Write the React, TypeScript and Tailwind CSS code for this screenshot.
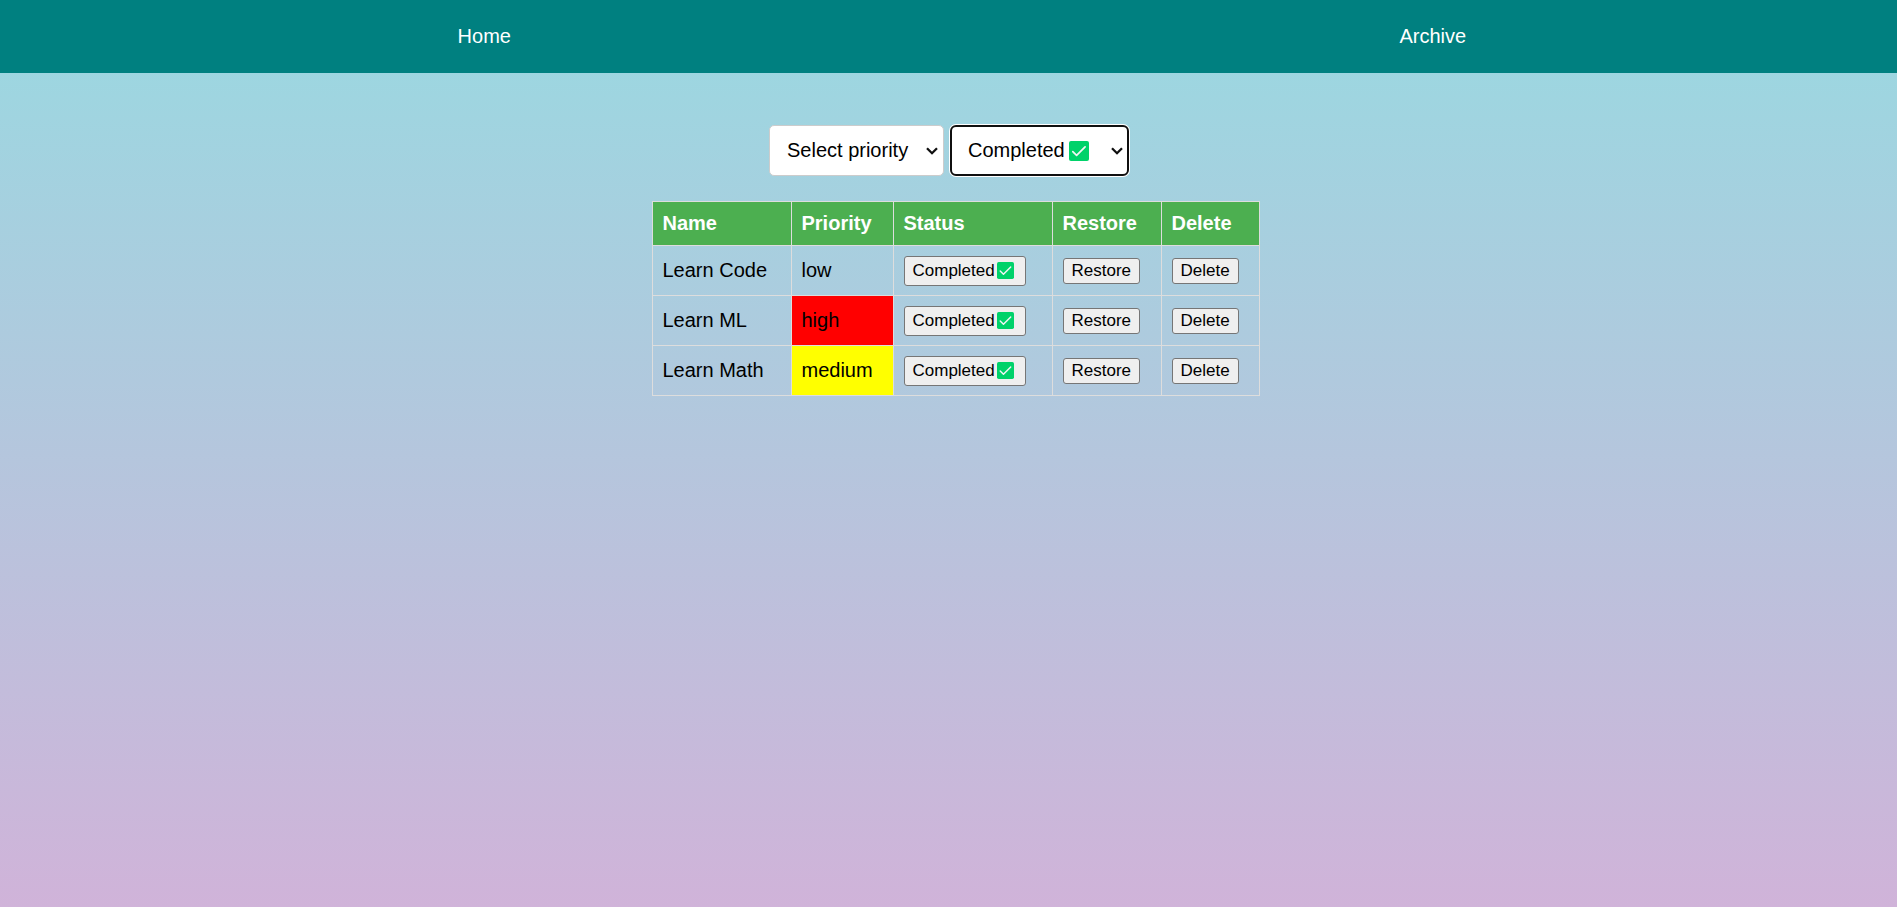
import React from "react";

type Priority = "low" | "medium" | "high";
type Task = { name: string; priority: Priority };

const tasks: Task[] = [
  { name: "Learn Code", priority: "low" },
  { name: "Learn ML", priority: "high" },
  { name: "Learn Math", priority: "medium" },
];

const priorityColor: Record<Priority, string> = {
  low: "",
  medium: "bg-[#ffff00]",
  high: "bg-[#ff0000]",
};

const cell = "border border-[#dddddd] px-[10px]";
const button =
  "block h-[26px] rounded-[3px] border border-[#767676] bg-[#efefef] px-2 text-[17px] leading-[22px] whitespace-nowrap text-black";

function CheckMark({ className }: { className: string }) {
  return (
    <svg viewBox="0 0 20 20" className={className} aria-hidden="true">
      <rect width="20" height="20" rx="2" fill="#00d26a" />
      <path
        d="M3.8 10.6 L7.6 14.4 L16.1 5.9"
        fill="none"
        stroke="#f4f4f4"
        strokeWidth="1.7"
        strokeLinecap="round"
        strokeLinejoin="round"
      />
    </svg>
  );
}

function Chevron() {
  return (
    <svg
      viewBox="0 0 12 8"
      className="pointer-events-none absolute top-[22px] right-[6px] h-2 w-3"
      aria-hidden="true"
    >
      <path d="M1 1.2 L6 6.2 L11 1.2" fill="none" stroke="#101010" strokeWidth="2.3" />
    </svg>
  );
}

export default function App() {
  return (
    <div className="min-h-screen bg-[linear-gradient(#99d9e1,#d0b3d9)] font-['Liberation_Sans',Arial,sans-serif] text-[20px] leading-[23px] text-black">
      <nav className="grid h-[73px] grid-cols-2 items-center bg-[#008080] text-center text-white">
        <a href="#home" className="pl-5">Home</a>
        <a href="#archive" className="pl-5">Archive</a>
      </nav>
      <main className="flex flex-col items-center pt-[52px]">
        <div className="ml-px flex items-center gap-[6px]">
          <div className="relative">
            <select
              aria-label="Priority"
              className="block h-[51px] w-[175px] appearance-none rounded-[5px] border border-[#cccccc] bg-white px-[17px]"
            >
              <option>Select priority</option>
              <option>low</option>
              <option>medium</option>
              <option>high</option>
            </select>
            <Chevron />
          </div>
          <div className="relative">
            <select
              aria-label="Status"
              className="block h-[51px] w-[179px] appearance-none rounded-[6px] border-2 border-[#101010] bg-white px-4 shadow-[0_0_0_1px_#ffffff] outline-none"
            >
              <option>Completed</option>
              <option>Pending</option>
            </select>
            <CheckMark className="pointer-events-none absolute top-4 left-[119px] size-5" />
            <Chevron />
          </div>
        </div>
        <table className="mt-[25px] ml-[14px] table-fixed border-collapse text-left">
          <colgroup>
            <col className="w-[139px]" />
            <col className="w-[102px]" />
            <col className="w-[159px]" />
            <col className="w-[109px]" />
            <col className="w-[98px]" />
          </colgroup>
          <thead>
            <tr className="h-11 bg-[#4caf50] text-white">
              {["Name", "Priority", "Status", "Restore", "Delete"].map((h) => (
                <th key={h} scope="col" className={`${cell} font-bold`}>{h}</th>
              ))}
            </tr>
          </thead>
          <tbody>
            {tasks.map((t) => (
              <tr key={t.name} className="h-[50px]">
                <td className={cell}>{t.name}</td>
                <td className={`${cell} ${priorityColor[t.priority]}`}>{t.priority}</td>
                <td className={cell}>
                  <button className="flex h-[30px] w-[122px] items-center gap-[2px] rounded-[3px] border border-[#767676] bg-[#efefef] pl-2 text-[17px] text-black">
                    Completed
                    <CheckMark className="size-[17px] shrink-0" />
                  </button>
                </td>
                <td className={cell}>
                  <button className={button}>Restore</button>
                </td>
                <td className={cell}>
                  <button className={button}>Delete</button>
                </td>
              </tr>
            ))}
          </tbody>
        </table>
      </main>
    </div>
  );
}
